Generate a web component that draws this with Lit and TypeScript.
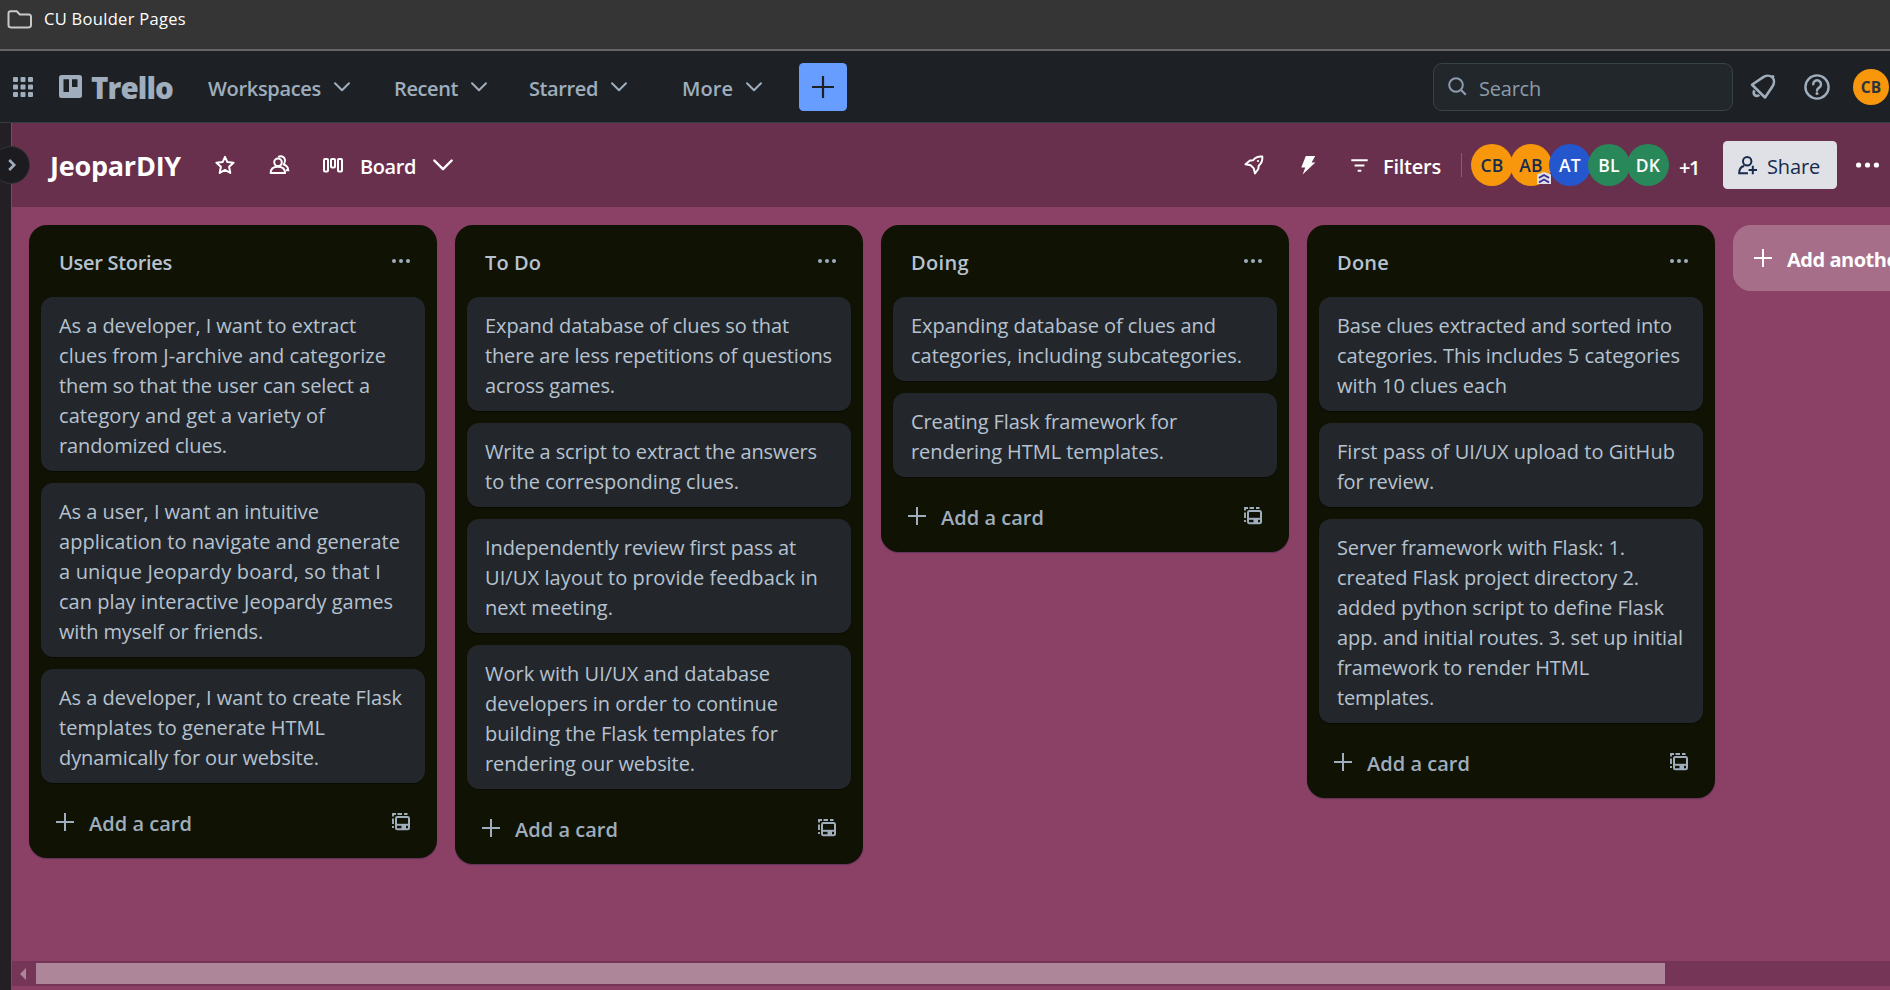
import { LitElement, html, css, svg } from "lit";
import { customElement, property } from "lit/decorators.js";

/** One run of text set to a fixed measure by spreading the difference over its letters. */
@customElement("fit-text")
class FitText extends LitElement {
  @property() text = "";
  @property({ type: Number }) measure = 0;
  static styles = css`
    :host { display: block; white-space: pre; flex: none; }
  `;
  render() {
    return html`<span>${this.text}</span>`;
  }
  updated() {
    const span = this.renderRoot.querySelector("span") as HTMLElement;
    span.style.letterSpacing = "0px";
    const natural = span.getBoundingClientRect().width;
    span.style.letterSpacing = `${(this.measure - natural) / this.text.length}px`;
    this.style.width = `${this.measure}px`;
  }
}

const t = (text: string, measure: number, cls = "") =>
  html`<fit-text class=${cls} .text=${text} .measure=${measure}></fit-text>`;

type Line = [string, number];
type List = { title: Line; cards: Line[][] };

const lists: List[] = [
  {
    title: ["User Stories", 113],
    cards: [
      [
        ["As a developer, I want to extract", 297],
        ["clues from J-archive and categorize", 327],
        ["them so that the user can select a", 311],
        ["category and get a variety of", 266],
        ["randomized clues.", 168],
      ],
      [
        ["As a user, I want an intuitive", 260],
        ["application to navigate and generate", 341],
        ["a unique Jeopardy board, so that I", 322],
        ["can play interactive Jeopardy games", 334],
        ["with myself or friends.", 204],
      ],
      [
        ["As a developer, I want to create Flask", 343],
        ["templates to generate HTML", 266],
        ["dynamically for our website.", 260],
      ],
    ],
  },
  {
    title: ["To Do", 56],
    cards: [
      [
        ["Expand database of clues so that", 304],
        ["there are less repetitions of questions", 347],
        ["across games.", 130],
      ],
      [
        ["Write a script to extract the answers", 332],
        ["to the corresponding clues.", 254],
      ],
      [
        ["Independently review first pass at", 311],
        ["UI/UX layout to provide feedback in", 333],
        ["next meeting.", 128],
      ],
      [
        ["Work with UI/UX and database", 285],
        ["developers in order to continue", 293],
        ["building the Flask templates for", 293],
        ["rendering our website.", 210],
      ],
    ],
  },
  {
    title: ["Doing", 58],
    cards: [
      [
        ["Expanding database of clues and", 305],
        ["categories, including subcategories.", 331],
      ],
      [
        ["Creating Flask framework for", 266],
        ["rendering HTML templates.", 253],
      ],
    ],
  },
  {
    title: ["Done", 52],
    cards: [
      [
        ["Base clues extracted and sorted into", 335],
        ["categories. This includes 5 categories", 343],
        ["with 10 clues each", 170],
      ],
      [
        ["First pass of UI/UX upload to GitHub", 338],
        ["for review.", 97],
      ],
      [
        ["Server framework with Flask: 1.", 288],
        ["created Flask project directory 2.", 302],
        ["added python script to define Flask", 327],
        ["app. and initial routes. 3. set up initial", 346],
        ["framework to render HTML", 252],
        ["templates.", 97],
      ],
    ],
  },
];

const icon = (w: number, h: number, body: unknown, cls = "") =>
  html`<svg class="ico ${cls}" width=${w} height=${h} viewBox="0 0 ${w} ${h}" fill="none">${body}</svg>`;

const folder = icon(25, 19, svg`<path d="M1.5 3.5a2.3 2.3 0 0 1 2.3-2.3h6l3 3.2h9a2.3 2.3 0 0 1 2.2 2.3v8.4a2.3 2.3 0 0 1-2.2 2.3H3.8a2.3 2.3 0 0 1-2.3-2.3z" stroke="#c9c9c9" stroke-width="2"/>`);

const grid = icon(20, 20, svg`${[0, 7.5, 15].map((y) =>
  [0, 7.5, 15].map((x) => svg`<rect x=${x} y=${y} width="5" height="5" rx="1" fill="#9fadbc"/>`))}`);

const logo = icon(23, 23, svg`<path fill-rule="evenodd" fill="#9fadbc" d="M2.5 0h18A2.5 2.5 0 0 1 23 2.5v18a2.5 2.5 0 0 1-2.5 2.5h-18A2.5 2.5 0 0 1 0 20.5v-18A2.5 2.5 0 0 1 2.5 0zM4.500 4.300v12.700h5.500V4.300zM13 4.300v7.700h5.500V4.300z"/>`);

const chevron = icon(16, 10, svg`<path d="M1 1.3l7 7 7-7" stroke="#9fadbc" stroke-width="2" stroke-linecap="round" stroke-linejoin="round"/>`);
const chevronLg = icon(20, 12, svg`<path d="M1.3 1.500l8.700 8.700 8.700-8.700" stroke="#fff" stroke-width="2.4" stroke-linecap="round" stroke-linejoin="round"/>`);

const plus = (s: number, color: string, w = 2) =>
  icon(s, s, svg`<path d="M${s / 2} 0V${s}M0 ${s / 2}H${s}" stroke=${color} stroke-width=${w}/>`);

const searchIcon = icon(19, 19, svg`<circle cx="8" cy="8" r="6.8" stroke="#8c9bab" stroke-width="2"/><path d="M12.8 12.800l5 5" stroke="#8c9bab" stroke-width="2.2"/>`);

const bell = icon(26, 26, svg`<path d="M2 10.8L12.5 3.600C16 .9 20 1.300 22.200 3.200c2.300 2.300 2.400 6.300-.1 9.800L15 23.500z" stroke="#9fadbc" stroke-width="2.6" stroke-linejoin="round"/><path d="M21.6 3.800L23.800 1.600" stroke="#9fadbc" stroke-width="2.6"/><path d="M4.6 16.500a3 3 0 0 0 4.600 4.400" stroke="#9fadbc" stroke-width="2.8"/>`);

const help = icon(26, 26, svg`<circle cx="13" cy="13" r="11.6" stroke="#9fadbc" stroke-width="2.4"/><path d="M9.2 10.300a3.900 3.900 0 1 1 5.900 3.300c-1.400.8-2.100 1.300-2.100 3" stroke="#9fadbc" stroke-width="2.4" stroke-linecap="round"/><circle cx="13" cy="19.5" r="1.5" fill="#9fadbc"/>`);

const star = icon(20, 20, svg`<path d="M10 1.800l2.400 5.300 6.200.6-4.500 4.100 1.200 6.200L10 14.900 4.700 18l1.200-6.200L1.400 7.700l6.200-.6z" stroke="#fff" stroke-width="2" stroke-linejoin="round"/>`);

const people = icon(21, 20, svg`<circle cx="9" cy="7.3" r="3.8" stroke="#fff" stroke-width="2"/><path d="M1.600 18c.1-3.800 2.600-6.300 7.200-6.300s7.200 2.500 7.300 6.300z" stroke="#fff" stroke-width="2" stroke-linejoin="round"/><path d="M9.200 2C11.500.5 15.600 1.300 16 4.800c.2 2.200-.7 3.700-1.300 4.700 2.900 1 4.400 2.700 4.600 5.700H17" stroke="#fff" stroke-width="1.9"/>`);

const boardIcon = icon(20, 15, svg`<rect x="1" y="1" width="4" height="12.5" rx="1" stroke="#fff" stroke-width="2"/><rect x="8" y="1" width="4" height="8.5" rx="1" stroke="#fff" stroke-width="2"/><rect x="15" y="1" width="4" height="12.5" rx="1" stroke="#fff" stroke-width="2"/>`);

const rocket = icon(20, 20, svg`<path d="M1.500 9.300L6 5.600l3.200-.4c2.300-2.800 5.500-4 9.100-3.600.4 3.600-.9 6.900-3.600 9.200l-.4 3.200-3.300 4.400-1.200-5-3.200-3.200z" stroke="#fff" stroke-width="2" stroke-linejoin="round"/><circle cx="14" cy="6" r="1.1" fill="#fff"/>`);

const bolt = icon(15, 19, svg`<path d="M4.800 0H14.200L10.600 6.500H14.300L1.600 18.600 4.300 11.500H.3z" fill="#fff"/>`);

const filter = icon(17, 13, svg`<path d="M.3 1.300H16.700M3.600 6.600H13.400M6.700 11.700H10.300" stroke="#fff" stroke-width="2"/>`);

const sharePerson = icon(20, 19, svg`<circle cx="9.2" cy="5.3" r="4.2" stroke="#172b4d" stroke-width="2"/><path d="M10 17.300H1.200c0-4 1.300-6.600 5-7.200M14.800 9.800v8.400M10.600 14H19" stroke="#172b4d" stroke-width="2"/>`);

const dots = (w: number, r: number, color: string) =>
  icon(w, 6, svg`<circle cx=${r} cy="3" r=${r} fill=${color}/><circle cx=${w / 2} cy="3" r=${r} fill=${color}/><circle cx=${w - r} cy="3" r=${r} fill=${color}/>`);

const template = icon(18, 18, svg`<rect x="4" y="4" width="13" height="12.3" rx="1.4" stroke="#9fadbc" stroke-width="2"/><path d="M4 10.800h13v2H4z" fill="#9fadbc"/><path d="M9.500 12h4.500v4.500h-4.500z" fill="#9fadbc"/><path d="M1 15V13M1 11V5.500M1 3.500V1H4M5.500 1H10M12 1h3.500" stroke="#9fadbc" stroke-width="1.900"/>`);

const badge = icon(14, 12, svg`<path d="M0 2.500L7 0l7 2.500V12H0z" fill="#dfe1e6"/><path d="M2 5.800L7 3l5 2.800M2 10.300l5-2.800 5 2.800" stroke="#403294" stroke-width="1.9"/>`, "badge");

@customElement("app-root")
class AppRoot extends LitElement {
  static styles = css`
    :host {
      display: flex;
      flex-direction: column;
      width: 1890px;
      height: 990px;
      overflow: hidden;
      font-family: "Open Sans", "Noto Sans", sans-serif;
      font-size: 20px;
      line-height: 30px;
      color: #b6c2cf;
    }
    * { box-sizing: border-box; }
    .ico { display: block; flex: none; overflow: visible; }
    .row { display: flex; align-items: center; }

    .bookmarks {
      height: 51px;
      flex: none;
      background: #353535;
      border-bottom: 2px solid #646464;
      padding: 0 0 12px 7px;
      gap: 12px;
      font-size: 16.5px;
      color: #fff;
    }
    .bookmarks .ico { margin-top: 1px; }

    .nav {
      height: 72px;
      flex: none;
      background: #1d2125;
      border-bottom: 1px solid #333c43;
      padding-left: 13px;
      color: #9fadbc;
      font-weight: 600;
    }
    .nav .menu { gap: 13px; }
    .nav .menu .ico { margin-top: 1px; }
    .nav fit-text { margin-top: 4px; }
    .nav .logo { margin-left: 26px; }
    .nav .brand { font-size: 29.5px; font-weight: 800; margin: 2px 0 0 9px; line-height: 40px; }
    .create {
      width: 48px;
      height: 48px;
      margin-left: 37px;
      border-radius: 4.5px;
      background: #669dff;
      justify-content: center;
    }
    .search {
      width: 300px;
      height: 48px;
      margin-left: 586px;
      padding-left: 14px;
      gap: 12px;
      border: 1px solid #38424a;
      border-radius: 9px;
      background: #22272b;
      color: #8c9bab;
      font-weight: 400;
    }
    .avatar {
      display: flex;
      flex: none;
      align-items: center;
      justify-content: center;
      position: relative;
      width: 42px;
      height: 42px;
      border-radius: 50%;
      font-size: 17.5px;
      font-weight: 600;
      color: #fff;
      letter-spacing: 0.2px;
    }
    .orange { background: #f8970c; color: #172b4d; }
    .orange.dark { color: #2c333a; }
    .blue { background: #2456ce; }
    .green { background: #298859; }
    .small { width: 36px; height: 36px; font-size: 15.5px; font-weight: 700; }
    .badge { position: absolute; right: 1px; bottom: 2px; z-index: 2; }

    .main { display: flex; flex: 1; min-height: 0; }
    .rail {
      position: relative;
      width: 11px;
      flex: none;
      background: #231f24;
      z-index: 2;
    }
    .toggle {
      position: absolute;
      left: -8px;
      top: 23px;
      width: 38px;
      height: 38px;
      border-radius: 50%;
      background: #1c1c20;
      border: 1px solid #33313a;
      display: flex;
      align-items: center;
      padding-left: 15px;
    }
    .board {
      display: flex;
      flex-direction: column;
      flex: 1;
      min-width: 0;
      background: #8b4065;
      border-left: 1px solid #7c4a69;
    }
    .boardbar {
      height: 84px;
      flex: none;
      background: #69304d;
      padding-left: 38px;
      color: #fff;
      font-weight: 600;
    }
    .boardbar fit-text { margin-top: 3px; }
    .boardbar .strong { font-weight: 650; }
    .boardbar .count { margin-top: 6px; }
    .boardbar .title { font-size: 27px; font-weight: 700; margin-top: 2px; line-height: 36px; }
    .divider { width: 1px; height: 24px; background: #8a5a74; }
    .faces { display: flex; }
    .faces .avatar + .avatar { margin-left: -3px; }
    .share {
      width: 114px;
      height: 48px;
      margin-left: 24px;
      padding-left: 15px;
      gap: 9px;
      border-radius: 4.5px;
      background: #dfe1e6;
      color: #172b4d;
      font-weight: 500;
    }

    .lists {
      flex: 1;
      display: flex;
      align-items: flex-start;
      gap: 18px;
      padding: 18px 0 0 17px;
      overflow: hidden;
    }
    .list {
      width: 408px;
      flex: none;
      padding: 0 12px;
      border-radius: 18px;
      background: #101204;
      box-shadow: 0 1px 1px rgba(9, 30, 66, 0.35);
    }
    .head {
      height: 72px;
      justify-content: space-between;
      padding: 0 15px 0 18px;
      font-weight: 600;
    }
    .head fit-text { margin-top: 4px; }
    .cards { display: flex; flex-direction: column; gap: 12px; }
    .card {
      padding: 14px 18px 10px;
      border-radius: 12px;
      background: #23272c;
      box-shadow: 0 1px 1px rgba(3, 4, 4, 0.5);
    }
    .foot {
      height: 75px;
      padding: 2px 15px 0;
      color: #9fadbc;
      font-weight: 600;
    }
    .foot fit-text { margin: 4px auto 0 15px; }
    .another {
      width: 408px;
      height: 66px;
      flex: none;
      padding-left: 21px;
      gap: 15px;
      border-radius: 18px;
      background: #a76e8a;
      color: #fff;
      font-weight: 700;
    }
    .another fit-text { margin-top: 3px; }
    .scroll {
      height: 25px;
      flex: none;
      margin-bottom: 4px;
      padding-left: 8px;
      background: #743557;
      gap: 10px;
    }
    .thumb { width: 1629px; height: 21px; background: #ad8799; }
  `;

  menu(label: string, measure: number, left: number) {
    return html`<div class="row menu" style="margin-left:${left}px">${t(label, measure)}${chevron}</div>`;
  }

  gap(px: number) {
    return html`<span style="flex:none;width:${px}px"></span>`;
  }

  list(l: List) {
    return html`<section class="list">
      <div class="row head">${t(l.title[0], l.title[1])}${dots(18, 2, "#9fadbc")}</div>
      <div class="cards">
        ${l.cards.map((c) => html`<div class="card">${c.map(([s, w]) => t(s, w))}</div>`)}
      </div>
      <div class="row foot">${plus(18, "#9fadbc")}${t("Add a card", 103)}${template}</div>
    </section>`;
  }

  render() {
    return html`
      <div class="row bookmarks">${folder}${t("CU Boulder Pages", 142)}</div>
      <header class="row nav">
        ${grid}
        <div class="row logo">${logo}${t("Trello", 82, "brand")}</div>
        ${this.menu("Workspaces", 113, 35)}
        ${this.menu("Recent", 64, 44)}
        ${this.menu("Starred", 69, 42)}
        ${this.menu("More", 51, 55)}
        <div class="row create">${plus(22, "#1d2125", 2.2)}</div>
        <div class="row search">${searchIcon}${t("Search", 62)}</div>
        ${this.gap(17)}${bell}${this.gap(28)}${help}${this.gap(23)}
        <div class="avatar orange small dark">CB</div>
      </header>
      <div class="main">
        <aside class="rail">
          <div class="toggle">${icon(8, 12, svg`<path d="M1.2 1l5 5-5 5" stroke="#9fadbc" stroke-width="2.6"/>`)}</div>
        </aside>
        <div class="board">
          <div class="row boardbar">
            ${t("JeoparDIY", 131, "title")}
            ${this.gap(34)}${star}${this.gap(34)}${people}${this.gap(33)}${boardIcon}
            ${this.gap(17)}${t("Board", 56, "strong")}${this.gap(17)}${chevronLg}
            ${this.gap(791)}${rocket}${this.gap(37)}${bolt}${this.gap(35)}${filter}
            ${this.gap(15)}${t("Filters", 58, "strong")}${this.gap(20)}
            <div class="divider"></div>
            ${this.gap(9)}
            <div class="faces">
              <div class="avatar orange">CB</div>
              <div class="avatar orange">AB${badge}</div>
              <div class="avatar blue">AT</div>
              <div class="avatar green">BL</div>
              <div class="avatar green">DK</div>
            </div>
            ${this.gap(10)}${t("+1", 20, "count")}
            <div class="row share">${sharePerson}${t("Share", 53)}</div>
            ${this.gap(19)}${dots(23, 2.6, "#fff")}
          </div>
          <div class="lists">
            ${lists.map((l) => this.list(l))}
            <div class="row another">${plus(18, "#fff")}${t("Add another list", 153)}</div>
          </div>
          <div class="row scroll">
            ${icon(6, 12, svg`<path d="M6 0v12L0 6z" fill="#ad8799"/>`)}
            <div class="thumb"></div>
          </div>
        </div>
      </div>
    `;
  }
}
